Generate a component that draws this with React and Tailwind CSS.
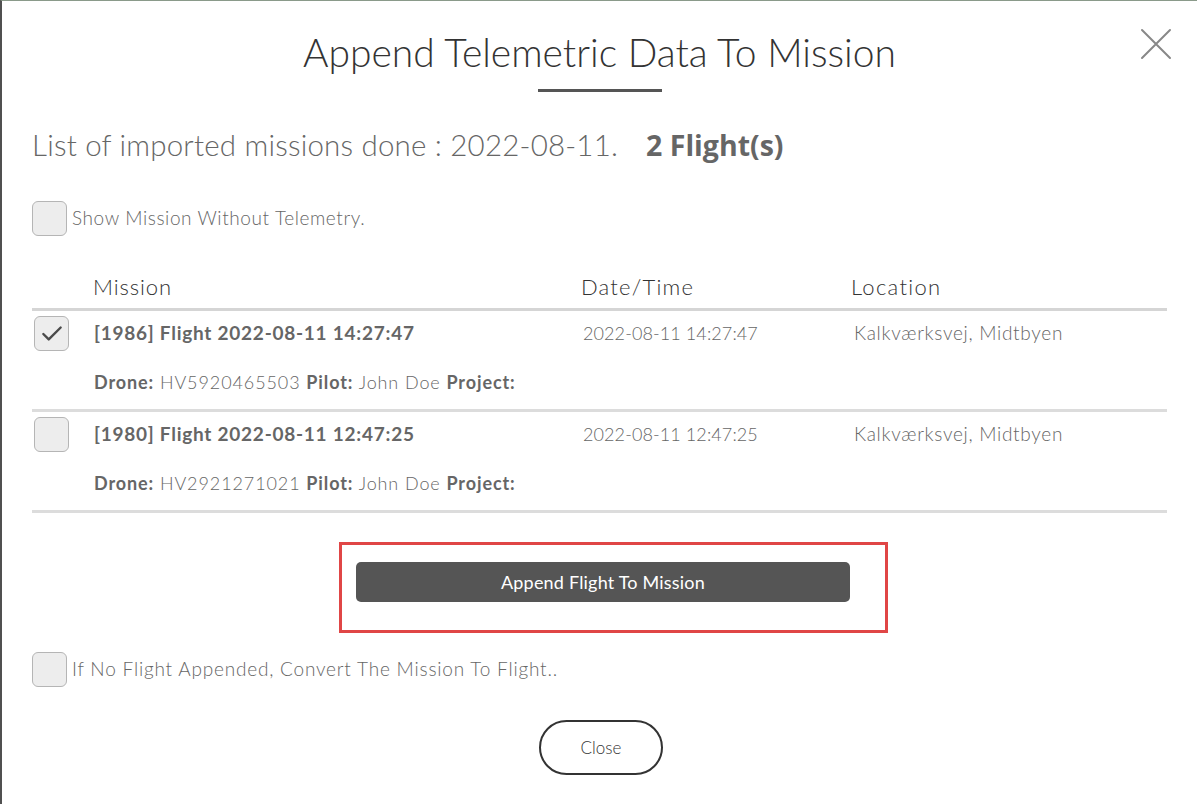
import { Check } from 'lucide-react'

const FLIGHTS = [
  {
    id: 1986,
    title: '[1986] Flight 2022-08-11 14:27:47',
    date: '2022-08-11 14:27:47',
    location: 'Kalkværksvej, Midtbyen',
    drone: 'HV5920465503',
    pilot: 'John Doe',
    checked: true,
  },
  {
    id: 1980,
    title: '[1980] Flight 2022-08-11 12:47:25',
    date: '2022-08-11 12:47:25',
    location: 'Kalkværksvej, Midtbyen',
    drone: 'HV2921271021',
    pilot: 'John Doe',
    checked: false,
  },
]

function Box({ checked }) {
  return (
    <div className="w-[35px] h-[35px] rounded-[6px] border border-[#b5b5b5] bg-[#ededed] flex items-center justify-center shrink-0">
      {checked && <Check size={26} strokeWidth={2.2} className="text-[#4a4a4a]" />}
    </div>
  )
}

// ── Flight row ─────────────────────────────────────────

function FlightRow({ f }) {
  return (
    <div className="flex border-b-[3px] border-[#dcdcdc] pt-[5px] h-[101px]">
      <div className="w-[61px] pl-[2px] shrink-0">
        <Box checked={f.checked} />
      </div>
      <div className="flex-1 min-w-0">
        <div className="h-[35px] flex items-center pl-[1px] font-bold text-[19px] text-[#666] tracking-[0.75px]">{f.title}</div>
        <div className="mt-[19px] pl-[1px] text-[18px] leading-[24px] text-[#666] font-light tracking-[0.9px]">
          <b className="font-bold tracking-[0.9px]">Drone:</b> {f.drone}{' '}
          <b className="font-bold tracking-[0.9px]">Pilot:</b> {f.pilot}{' '}
          <b className="font-bold tracking-[0.9px]">Project:</b>
        </div>
      </div>
      <div className="w-[270px] shrink-0 h-[35px] flex items-center pl-[5px] text-[18px] text-[#666] font-light tracking-[0.1px]">{f.date}</div>
      <div className="w-[319px] shrink-0 h-[35px] flex items-center pl-[6px] text-[19px] text-[#666] font-light tracking-[0.7px]">{f.location}</div>
    </div>
  )
}

export default function App() {
  return (
    <div
      className="w-[1197px] h-[804px] bg-white border-t border-[#8a9a8a] border-l-2 border-l-[#505050] overflow-hidden relative text-[#333]"
      style={{ fontFamily: 'Lato, "Open Sans", sans-serif' }}
    >
      {/* Close icon */}
      <button className="absolute left-[1137px] top-[27px] w-[34px] h-[32px] flex items-center justify-center">
        <svg width="32" height="32" viewBox="0 0 32 32" fill="none" stroke="#888" strokeWidth="2" strokeLinecap="round">
          <path d="M2 2 L30 30 M30 2 L2 30" />
        </svg>
      </button>

      {/* Header */}
      <div className="flex flex-col items-center pt-[27px]">
        <h1 className="text-[39px] font-light text-[#333] leading-[48px]">Append Telemetric Data To Mission</h1>
        <div className="mt-[13px] w-[124px] h-[3px] bg-[#555]" />
      </div>

      <div className="px-[30px]">
        <div className="mt-[33px] flex items-baseline text-[#666] leading-[40px]">
          <span className="font-light text-[29.5px] tracking-[0.2px]">List of imported missions done : 2022-08-11.</span>
          <span className="ml-[28px] font-bold text-[28.5px]" style={{ fontFamily: '"Open Sans", Lato, sans-serif' }}>2 Flight(s)</span>
        </div>

        <label className="mt-[36px] flex items-center gap-[5px]">
          <Box />
          <span className="text-[19px] text-[#666] font-light tracking-[0.6px]">Show Mission Without Telemetry.</span>
        </label>

        {/* Table */}
        <div className="mt-[30px]">
          <div className="flex border-b-[3px] border-[#d5d5d5] h-[45px] pt-[6px] items-start text-[22px] leading-[30px] text-[#333] font-light tracking-[0.9px]">
            <div className="w-[61px] shrink-0" />
            <div className="flex-1">Mission</div>
            <div className="w-[270px] shrink-0 pl-[3px] tracking-[1.2px]">Date/Time</div>
            <div className="w-[319px] shrink-0 pl-[3px] tracking-[1.3px]">Location</div>
          </div>
          {FLIGHTS.map(f => <FlightRow key={f.id} f={f} />)}
        </div>

        <div className="flex justify-center mt-[29px]">
          <div className="ml-[28px] w-[549px] h-[91px] border-[3px] border-[#e04646] flex items-start justify-start pl-[14px] pt-[17px]">
            <button className="w-[494px] h-[40px] rounded-[5px] bg-[#555] text-white text-[18px] font-normal tracking-[0.2px]">
              Append Flight To Mission
            </button>
          </div>
        </div>

        <label className="mt-[19px] flex items-center gap-[5px]">
          <Box />
          <span className="text-[19px] text-[#666] font-light tracking-[0.8px]">If No Flight Appended, Convert The Mission To Flight..</span>
        </label>

        <div className="flex justify-center mt-[33px]">
          <button className="ml-[3px] w-[124px] h-[55px] rounded-full border-2 border-[#333] text-[17px] text-[#333] font-light">
            Close
          </button>
        </div>
      </div>
    </div>
  )
}
